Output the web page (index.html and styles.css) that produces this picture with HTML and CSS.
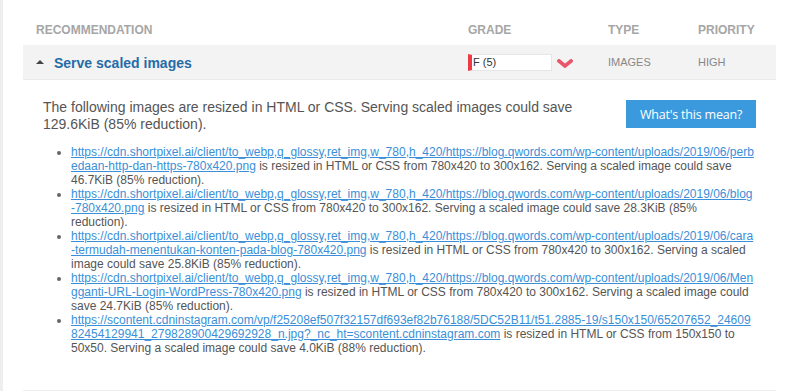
FILE: index.html
```html
<!DOCTYPE html>
<html lang="en">
<head>
  <meta charset="UTF-8">
  <meta name="viewport" content="width=device-width, initial-scale=1.0">
  <title>Recommendations</title>
  <link rel="stylesheet" href="styles.css">
</head>
<body>
  <div class="page">
    <div class="report">
      <div class="report-head">
        <div class="col col-rec">Recommendation</div>
        <div class="col col-grade">Grade</div>
        <div class="col col-type">Type</div>
        <div class="col col-prio">Priority</div>
      </div>

      <div class="rec-row">
        <div class="col col-rec">
          <span class="toggle-icon"></span>
          <span class="rec-title">Serve scaled images</span>
        </div>
        <div class="col col-grade">
          <div class="grade-box">F (5)</div>
          <svg class="chevron" width="16" height="9" viewBox="0 0 16 9">
            <path d="M2 2 L8 7 L14 2" fill="none" stroke="#e9566b" stroke-width="3.6" stroke-linecap="square"/>
          </svg>
        </div>
        <div class="col col-type">Images</div>
        <div class="col col-prio">High</div>
      </div>

      <!-- Expanded details -->
      <div class="rec-details">
        <div class="details-top">
          <p class="details-text">The following images are resized in HTML or CSS. Serving scaled images could save 129.6KiB (85% reduction).</p>
          <button class="info-btn">What's this mean?</button>
        </div>
        <ul class="details-list">
          <li><a href="#">https://cdn.shortpixel.ai/client/to_webp,q_glossy,ret_img,w_780,h_420/https://blog.qwords.com/wp-content/uploads/2019/06/perbedaan-http-dan-https-780x420.png</a> is resized in HTML or CSS from 780x420 to 300x162. Serving a scaled image could save 46.7KiB (85% reduction).</li>
          <li><a href="#">https://cdn.shortpixel.ai/client/to_webp,q_glossy,ret_img,w_780,h_420/https://blog.qwords.com/wp-content/uploads/2019/06/blog-780x420.png</a> is resized in HTML or CSS from 780x420 to 300x162. Serving a scaled image could save 28.3KiB (85% reduction).</li>
          <li><a href="#">https://cdn.shortpixel.ai/client/to_webp,q_glossy,ret_img,w_780,h_420/https://blog.qwords.com/wp-content/uploads/2019/06/cara-termudah-menentukan-konten-pada-blog-780x420.png</a> is resized in HTML or CSS from 780x420 to 300x162. Serving a scaled image could save 25.8KiB (85% reduction).</li>
          <li><a href="#">https://cdn.shortpixel.ai/client/to_webp,q_glossy,ret_img,w_780,h_420/https://blog.qwords.com/wp-content/uploads/2019/06/Mengganti-URL-Login-WordPress-780x420.png</a> is resized in HTML or CSS from 780x420 to 300x162. Serving a scaled image could save 24.7KiB (85% reduction).</li>
          <li><a href="#">https://scontent.cdninstagram.com/vp/f25208ef507f32157df693ef82b76188/5DC52B11/t51.2885-19/s150x150/65207652_2460982454129941_279828900429692928_n.jpg?_nc_ht=scontent.cdninstagram.com</a> is resized in HTML or CSS from 150x150 to 50x50. Serving a scaled image could save 4.0KiB (88% reduction).</li>
        </ul>
      </div>
    </div>
  </div>
</body>
</html>
```

FILE: styles.css
```css
:root {
  --text: #555;
  --muted: #a6a6a6;
  --label: #888;
  --link: #3a8fd8;
  --title: #256ca7;
  --row-bg: #f3f3f3;
  --line: #e9e9e9;
  --button: #3b9ade;
}

body {
  margin: 0;
  font-family: "Liberation Sans", Arial, sans-serif;
  color: var(--text);
  background: #fff;
}

.page {
  border-left: 3px solid #eee;
  min-height: 391px;
  box-sizing: border-box;
  padding-left: 20px;
  width: 776px;
}

.report-head,
.rec-row {
  display: flex;
  align-items: center;
}

.report-head {
  padding: 23px 0 8px;
  font-size: 12px;
  line-height: 14px;
  font-weight: bold;
  text-transform: uppercase;
  color: var(--muted);
}

.col-rec {
  flex: 0 0 445px;
  padding-left: 13px;
  box-sizing: border-box;
  display: flex;
  align-items: center;
}

.col-grade {
  flex: 0 0 140px;
  display: flex;
  align-items: center;
}

.col-type {
  flex: 0 0 90px;
}

.col-prio {
  flex: 1;
}

.rec-row {
  height: 34px;
  background: var(--row-bg);
  border-bottom: 1px solid var(--line);
  font-size: 11px;
  color: var(--label);
  text-transform: uppercase;
}

.toggle-icon {
  width: 0;
  height: 0;
  border-left: 4px solid transparent;
  border-right: 4px solid transparent;
  border-bottom: 4px solid #444;
  margin-right: 10px;
}

.rec-title {
  font-size: 14px;
  font-weight: bold;
  color: var(--title);
  text-transform: none;
  position: relative;
  top: 1px;
}

.grade-box {
  width: 78px;
  height: 15px;
  line-height: 15px;
  background: #fff;
  border: 1px solid #e6e6e6;
  border-left: 4px solid #ee3a43;
  font-size: 11px;
  color: #333;
  text-transform: none;
  padding-left: 1px;
  box-sizing: content-box;
}

.chevron {
  margin-left: 5px;
  position: relative;
  top: 1px;
}

.rec-details {
  padding: 18px 20px 35px;
  border-bottom: 2px solid #eee;
}

.details-top {
  display: flex;
  align-items: flex-start;
}

.details-text {
  flex: 1;
  margin: 0;
  font-size: 14px;
  line-height: 17px;
  padding-top: 1px;
}

.info-btn {
  margin-left: 30px;
  margin-top: 2px;
  width: 130px;
  height: 28px;
  background: var(--button);
  color: #fff;
  border: none;
  font-family: "Open Sans", sans-serif;
  font-size: 12.5px;
  letter-spacing: -0.2px;
  cursor: pointer;
}

.details-list {
  margin: 12px 0 0;
  padding-left: 28px;
  font-size: 12px;
  line-height: 14px;
}

.details-list li::marker {
  color: #666;
}

.details-list a {
  color: var(--link);
  text-decoration: underline;
  word-break: break-all;
}
```
